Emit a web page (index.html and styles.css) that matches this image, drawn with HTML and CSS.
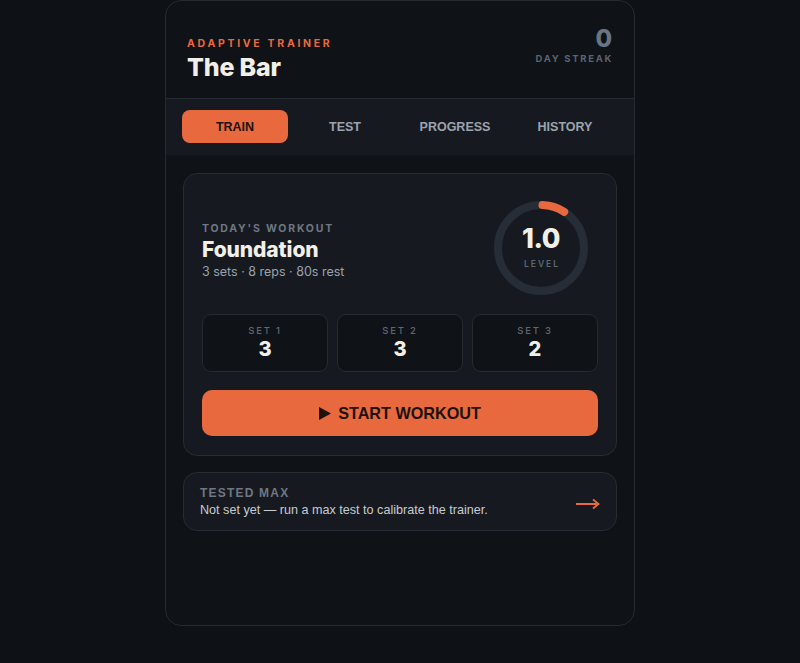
FILE: index.html
```html
<!DOCTYPE html>
<html lang="en">
<head>
<meta charset="utf-8">
<title>The Bar</title>
<link rel="stylesheet" href="styles.css">
</head>
<body>
<div class="app">
  <header class="header">
    <div class="brand">
      <div class="eyebrow">ADAPTIVE TRAINER</div>
      <h1 class="title">The Bar</h1>
    </div>
    <div class="streak">
      <div class="streak-num">0</div>
      <div class="streak-label">DAY STREAK</div>
    </div>
  </header>
  <nav class="tabs">
    <button class="tab active">TRAIN</button>
    <button class="tab">TEST</button>
    <button class="tab">PROGRESS</button>
    <button class="tab">HISTORY</button>
  </nav>
  <main class="content">
    <section class="card workout">
      <div class="workout-top">
        <div class="workout-info">
          <div class="label">TODAY'S WORKOUT</div>
          <div class="workout-name">Foundation</div>
          <div class="workout-meta">3 sets · 8 reps · 80s rest</div>
        </div>
        <div class="ring">
          <svg width="94" height="94" viewBox="0 0 94 94">
            <circle cx="47" cy="47" r="43" fill="none" stroke="#262d37" stroke-width="8"/>
            <circle cx="47" cy="47" r="43" fill="none" stroke="#e8693e" stroke-width="8" stroke-linecap="round" stroke-dasharray="23 300" transform="rotate(-88 47 47)"/>
          </svg>
          <div class="ring-text">
            <div class="ring-num">1.0</div>
            <div class="ring-label">LEVEL</div>
          </div>
        </div>
      </div>
      <div class="sets">
        <div class="set"><div class="set-label">SET 1</div><div class="set-num">3</div></div>
        <div class="set"><div class="set-label">SET 2</div><div class="set-num">3</div></div>
        <div class="set"><div class="set-label">SET 3</div><div class="set-num">2</div></div>
      </div>
      <button class="start"><svg class="play" width="12" height="13" viewBox="0 0 12 13"><path d="M0 0 L12 6.5 L0 13 Z" fill="#1c120e"/></svg>START WORKOUT</button>
    </section>
    <section class="card max">
      <div class="max-info">
        <div class="max-label">TESTED MAX</div>
        <div class="max-text">Not set yet — run a max test to calibrate the trainer.</div>
      </div>
      <svg class="arrow" width="24" height="12" viewBox="0 0 24 12"><path d="M0 6 H22 M17 1.5 L22.5 6 L17 10.5" fill="none" stroke="#e8693e" stroke-width="1.8"/></svg>
    </section>
  </main>
</div>
</body>
</html>
```

FILE: styles.css
```css
* { box-sizing: border-box; }
html, body { margin: 0; padding: 0; }
body {
  background: #0e1115;
  font-family: Inter, "Liberation Sans", Arial, sans-serif;
  color: #f1efe9;
}
.app {
  width: 470px;
  height: 626px;
  margin: 0 auto;
  border: 1px solid #262b33;
  border-radius: 16px;
  background: #0f1216;
  overflow: hidden;
}
.header {
  height: 98px;
  border-bottom: 1px solid #262b33;
  padding: 36px 22px 0 21px;
  display: flex;
  justify-content: space-between;
  align-items: flex-start;
}
.eyebrow {
  font-family: Inter, sans-serif;
  font-size: 10.5px;
  font-weight: 700;
  letter-spacing: 2.7px;
  color: #e8693e;
  line-height: 14px;
}
.title {
  margin: 2px 0 0;
  font-size: 25px;
  font-weight: 800;
  letter-spacing: -0.2px;
  line-height: 28px;
  color: #f2efe8;
}
.streak {
  text-align: right;
  margin-top: -12px;
}
.streak-num {
  font-size: 24px;
  font-weight: 800;
  color: #6b7482;
  line-height: 28px;
}
.streak-label {
  font-size: 9.5px;
  font-weight: 700;
  letter-spacing: 1.7px;
  color: #5b6370;
  margin-top: 0;
  margin-right: -1px;
}
.tabs {
  background: #161a20;
  height: 56px;
  padding: 11px 16px 12px;
  display: grid;
  grid-template-columns: repeat(4, 1fr);
  gap: 4px;
}
.tab {
  border: none;
  background: transparent;
  font-family: "Liberation Sans", Arial, sans-serif;
  font-weight: 700;
  font-size: 12.5px;
  color: #9ca3ae;
  border-radius: 8px;
  padding: 0;
  height: 33px;
}
.tab.active {
  background: #e8693e;
  color: #1c120e;
}
.content {
  padding: 18px 17px;
}
.card {
  background: #161a20;
  border: 1px solid #272c35;
  border-radius: 14px;
}
.workout {
  padding: 19px 18px 19px 18px;
}
.workout-top {
  display: flex;
  justify-content: space-between;
  align-items: center;
  padding-top: 8px;
}
.workout-info {
  padding-top: 5px;
}
.label {
  font-size: 10.5px;
  font-weight: 700;
  letter-spacing: 1.8px;
  color: #6f7783;
  line-height: 14px;
}
.workout-name {
  font-size: 21px;
  font-weight: 800;
  letter-spacing: -0.1px;
  color: #f2efe8;
  line-height: 24px;
  margin-top: 2px;
}
.workout-meta {
  font-size: 12.5px;
  color: #9ba1ab;
  margin-top: 2px;
  line-height: 16px;
}
.ring {
  position: relative;
  width: 94px;
  height: 94px;
  margin-right: 10px;
}
.ring svg { display: block; }
.ring-text {
  position: absolute;
  inset: 0;
  display: flex;
  flex-direction: column;
  align-items: center;
  justify-content: center;
}
.ring-num {
  font-size: 27px;
  font-weight: 800;
  color: #f2efe8;
  line-height: 30px;
  margin-top: -4px;
  letter-spacing: -0.5px;
}
.ring-label {
  font-size: 8.5px;
  font-weight: 600;
  letter-spacing: 2px;
  color: #5e6672;
  margin-top: 5px;
  margin-left: 2px;
}
.sets {
  display: grid;
  grid-template-columns: repeat(3, 1fr);
  gap: 9px;
  margin-top: 19px;
}
.set {
  height: 58px;
  background: #0f1216;
  border: 1px solid #252a33;
  border-radius: 9px;
  text-align: center;
  padding-top: 10px;
}
.set-label {
  font-size: 9.5px;
  font-weight: 500;
  letter-spacing: 1.8px;
  color: #5f6773;
  line-height: 12px;
}
.set-num {
  font-size: 20px;
  font-weight: 800;
  color: #f2efe8;
  line-height: 24px;
}
.start {
  display: flex;
  align-items: center;
  justify-content: center;
  gap: 7px;
  width: 100%;
  height: 46px;
  margin-top: 18px;
  border: none;
  border-radius: 10px;
  background: #e8693e;
  color: #1c120e;
  font-family: "Liberation Sans", Arial, sans-serif;
  font-weight: 700;
  font-size: 16.2px;
}
.play { display: block; }
.max {
  margin-top: 16px;
  height: 59px;
  padding: 0 16px 0 16px;
  display: flex;
  align-items: center;
  justify-content: space-between;
}
.max-label {
  font-family: "Liberation Sans", Arial, sans-serif;
  font-size: 12px;
  font-weight: 700;
  letter-spacing: 1.2px;
  color: #6f7783;
  line-height: 14px;
}
.max-text {
  font-family: "Liberation Sans", Arial, sans-serif;
  font-size: 12.6px;
  color: #c8cbd0;
  line-height: 16px;
  margin-top: 2px;
}
.arrow {
  display: block;
  margin-top: 4px;
}
```
